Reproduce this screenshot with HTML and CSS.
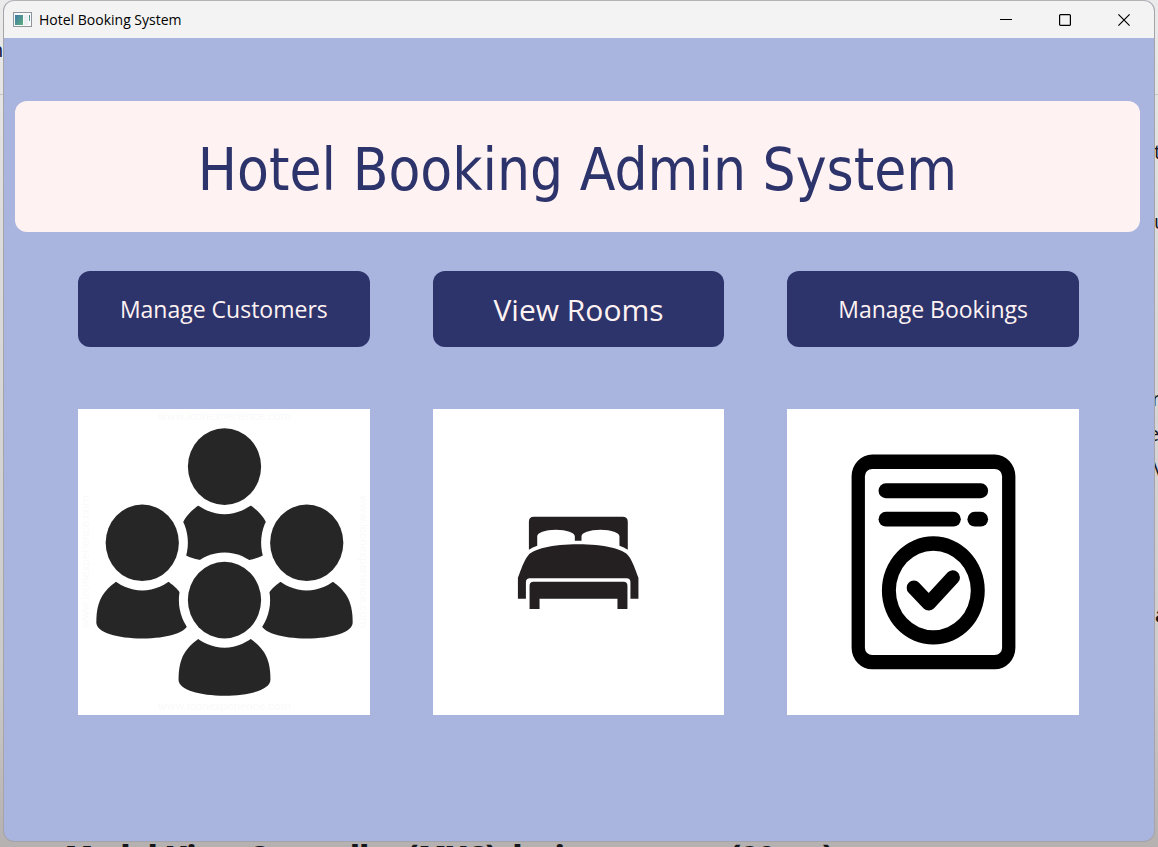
FILE: index.html
```html
<!DOCTYPE html>
<html lang="en">
<head>
<meta charset="utf-8">
<title>Hotel Booking System</title>
<link rel="stylesheet" href="styles.css">
</head>
<body>
<div class="backdrop" aria-hidden="true">
  <span class="rule"></span>
  <span class="scrap scrap-n">n</span>
  <span class="scrap scrap-t">t</span>
  <span class="scrap scrap-u">u</span>
  <span class="link-mark"></span>
  <span class="scrap scrap-r">r</span>
  <span class="scrap scrap-e">e</span>
  <span class="scrap scrap-v">V</span>
  <span class="scrap scrap-a">a</span>
  <span class="backdrop-heading">Model-View Controller (MVC) design pattern (20pts)</span>
</div>
<div class="window">
  <header class="titlebar">
    <svg class="app-icon" viewBox="0 0 19 15" aria-hidden="true">
      <defs>
        <linearGradient id="tile" x1="0" y1="0" x2="1" y2="1">
          <stop offset="0" stop-color="#3f78a8"/><stop offset="1" stop-color="#5cb07c"/>
        </linearGradient>
      </defs>
      <rect x="0.5" y="0.5" width="18" height="14" fill="#fafafa" stroke="#8f969b"/>
      <rect x="2" y="3" width="8" height="10" fill="url(#tile)"/>
      <rect x="11" y="3" width="4" height="10" fill="#eceff1"/>
      <rect x="16" y="3" width="1" height="6" fill="url(#tile)"/>
    </svg>
    <span class="window-title">Hotel Booking System</span>
    <div class="window-controls">
      <button type="button" aria-label="Minimize"><svg viewBox="0 0 12 12"><path d="M0 5.5h12"/></svg></button>
      <button type="button" aria-label="Maximize"><svg viewBox="0 0 12 12"><rect x="0.6" y="0.6" width="10.8" height="10.8" rx="1"/></svg></button>
      <button type="button" aria-label="Close"><svg viewBox="0 0 12 12"><path d="M0.4 0.4l11.2 11.2M11.6 0.4L0.4 11.6"/></svg></button>
    </div>
  </header>
  <main class="content">
    <h1 class="banner">Hotel Booking Admin System</h1>
    <div class="options">
      <button type="button" class="action">Manage Customers</button>
      <button type="button" class="action action-large">View Rooms</button>
      <button type="button" class="action">Manage Bookings</button>
      <svg class="picture" viewBox="24 27 876 918" role="img" aria-label="Customers">
        <defs>
          <path id="torso" d="M-79 117C-114 144-138 169-138 239C-138 269-74 287 0 287S138 269 138 239C138 169 114 144 79 117Z"/>
          <ellipse id="halo" rx="137" ry="143"/>
          <ellipse id="head" rx="110" ry="115"/>
        </defs>
        <g class="watermark">
          <text x="464" y="60">www.iconexperience.com</text>
          <text x="464" y="931">www.iconexperience.com</text>
          <text transform="translate(56 486) rotate(-90)">www.iconexperience.com</text>
          <text transform="translate(872 486) rotate(90)">www.iconexperience.com</text>
        </g>
        <g fill="#262626">
          <use href="#torso" x="464" y="200"/><use href="#torso" x="217" y="429"/>
          <use href="#torso" x="711" y="429"/><use href="#torso" x="464" y="601"/>
        </g>
        <g fill="#fff">
          <use href="#halo" x="464" y="200"/><use href="#halo" x="217" y="429"/>
          <use href="#halo" x="711" y="429"/><use href="#halo" x="464" y="601"/>
        </g>
        <g fill="#262626">
          <use href="#head" x="464" y="200"/><use href="#head" x="217" y="429"/>
          <use href="#head" x="711" y="429"/><use href="#head" x="464" y="601"/>
        </g>
      </svg>
      <svg class="picture" viewBox="-201 -273 876 918" role="img" aria-label="Rooms">
        <g fill="#241f21">
          <path d="M87 150V66Q87 51 102 51H368Q384 51 384 66V150Q373 143 359 138V110C359 99 335 90 302 90S245 99 245 110V123H225V110C225 99 201 90 168 90S112 99 112 110V138Q98 143 87 150Z"/>
          <path d="M54 297V234C64 208 71 185 83 169C96 147 160 133 235 133S374 147 387 169C399 185 406 208 416 234V297H392V247Q392 235 380 235H90Q78 235 78 247V297Z"/>
          <path d="M89 328V258Q89 246 101 246H371Q383 246 383 258V328H353V297H119V328Z"/>
        </g>
      </svg>
      <svg class="picture" viewBox="-159 -94 876 918" role="img" aria-label="Bookings">
        <path fill-rule="evenodd" d="M97 43H465A62 65 0 0 1 527 108V623A62 65 0 0 1 465 688H97A62 65 0 0 1 35 623V108A62 65 0 0 1 97 43ZM97 86A22 22 0 0 0 75 108V623A22 22 0 0 0 97 645H465A22 22 0 0 0 487 623V108A22 22 0 0 0 465 86Z"/>
        <rect x="116" y="129" width="329" height="45" rx="22"/>
        <rect x="116" y="215" width="247" height="44" rx="22"/>
        <rect x="383" y="215" width="62" height="44" rx="22"/>
        <path fill-rule="evenodd" d="M126 451A154 162 0 0 1 435 451A154 162 0 0 1 126 451ZM168 451A112 119 0 0 0 393 451A112 119 0 0 0 168 451Z"/>
        <path d="M222 443L267 490L339 412" fill="none" stroke="#000" stroke-width="43" stroke-linecap="round" stroke-linejoin="round"/>
      </svg>
    </div>
  </main>
</div>
</body>
</html>
```
FILE: styles.css
```css
* {
  box-sizing: border-box;
}

body {
  margin: 0;
  min-height: 100vh;
  padding: 0 3px 5px;
  overflow: hidden;
  position: relative;
  background: linear-gradient(#ebebeb, #dedddd 25%, #cdcaca 80%, #b5b1b1);
  font-family: "Open Sans", "Noto Sans", sans-serif;
}

/* Document page that shows round the window's edges */
.backdrop {
  position: absolute;
  inset: 0;
  overflow: hidden;
  color: #15151c;
}

.rule {
  position: absolute;
  top: 94px;
  left: 0;
  right: 0;
  height: 1px;
  background: #c4c4c4;
}

.scrap {
  position: absolute;
  left: 1154px;
  font-size: 20px;
  line-height: 24px;
}

.scrap-n { top: 38px; left: -9px; color: #0c1440; }
.scrap-t { top: 140px; }
.scrap-u { top: 210px; }
.scrap-r { top: 387px; left: 1152px; }
.scrap-e { top: 422px; left: 1148px; }
.scrap-v { top: 457px; left: 1153px; }
.scrap-a { top: 603px; left: 1155px; font-weight: 700; }

.link-mark {
  position: absolute;
  top: 290px;
  left: 1154px;
  width: 1px;
  height: 10px;
  background: #3a86b8;
}

.backdrop-heading {
  position: absolute;
  top: 835px;
  left: 65px;
  font-size: 29px;
  line-height: 40px;
  font-weight: 800;
  white-space: nowrap;
}

.window {
  position: relative;
  display: flex;
  flex-direction: column;
  min-height: calc(100vh - 5px);
  border: 1px solid #a5a4a8;
  border-top-color: #b4b4b4;
  border-radius: 11px;
  overflow: hidden;
  background: #a9b4df;
}

.titlebar {
  display: flex;
  align-items: center;
  height: 37px;
  padding: 0 1px 0 9px;
  background: #f3f3f3;
}

.app-icon {
  width: 19px;
  height: 15px;
}

.window-title {
  margin-left: 7px;
  font-size: 14px;
  line-height: 20px;
  color: #000;
}

.window-controls {
  display: flex;
  margin-left: auto;
}

.window-controls button {
  display: flex;
  align-items: center;
  justify-content: center;
  width: 59px;
  height: 37px;
  padding: 0;
  border: 0;
  background: none;
}

.window-controls svg {
  width: 12px;
  height: 12px;
  fill: none;
  stroke: #000;
  stroke-width: 1.2;
}

.content {
  flex: 1;
  padding: 63px 14px 0 11px;
}

.banner {
  display: flex;
  align-items: center;
  justify-content: center;
  height: 131px;
  margin: 0;
  padding-top: 6px;
  border-radius: 12px;
  background: #fff2f2;
  color: #2d346b;
  font-family: "DejaVu Sans Condensed", "DejaVu Sans", sans-serif;
  font-stretch: condensed;
  font-size: 58px;
  line-height: 72px;
  font-weight: 400;
}

.options {
  display: grid;
  grid-template-columns: repeat(3, 1fr);
  gap: 62px 63px;
  padding: 39px 61px 0 63px;
}

.action {
  height: 76px;
  padding: 0;
  border: 0;
  border-radius: 12px;
  background: #2d346b;
  color: #fff2f2;
  font-family: inherit;
  font-size: 23px;
  line-height: 32px;
}

.action-large {
  padding-top: 2px;
  font-size: 30px;
  line-height: 44px;
}

.picture {
  display: block;
  width: 100%;
  background: #fff;
}

.watermark {
  fill: #fafafa;
  font-family: Roboto, sans-serif;
  font-size: 35px;
  text-anchor: middle;
}
```
